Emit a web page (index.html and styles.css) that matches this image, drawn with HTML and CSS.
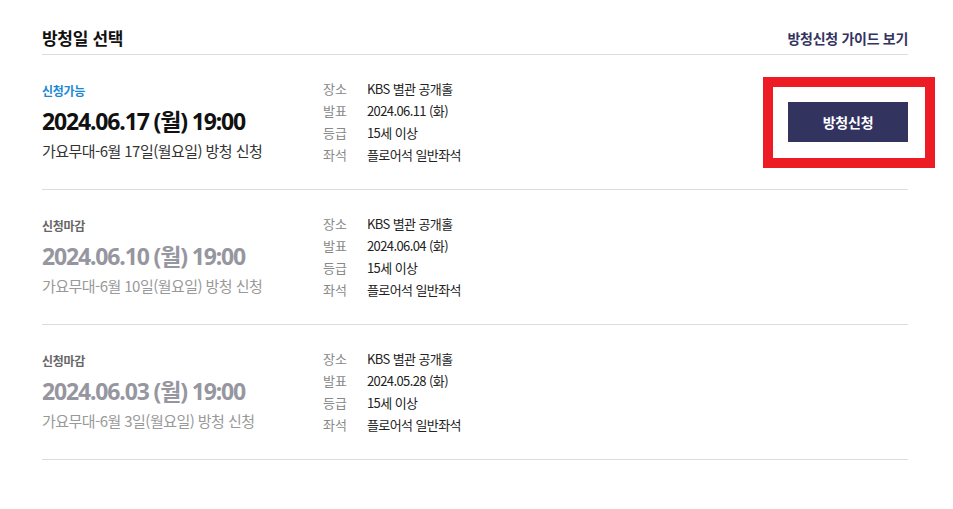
FILE: index.html
```html
<!DOCTYPE html>
<html lang="ko">
<head>
<meta charset="utf-8">
<link rel="stylesheet" href="styles.css">
</head>
<body>
<div class="wrap">
  <div class="head">
    <h2 class="title">방청일 선택</h2>
    <a class="guide">방청신청 가이드 보기</a>
  </div>
  <ul class="list">
    <li class="row open">
      <div class="main">
        <p class="status">신청가능</p>
        <p class="date">2024.06.17 (월) 19:00</p>
        <p class="sub">가요무대-6월 17일(월요일) 방청 신청</p>
      </div>
      <dl class="info">
        <div class="line"><dt>장소</dt><dd>KBS 별관 공개홀</dd></div>
        <div class="line"><dt>발표</dt><dd>2024.06.11 (화)</dd></div>
        <div class="line"><dt>등급</dt><dd>15세 이상</dd></div>
        <div class="line"><dt>좌석</dt><dd>플로어석 일반좌석</dd></div>
      </dl>
      <div class="action">
        <span class="mark"></span>
        <button class="btn">방청신청</button>
      </div>
    </li>
    <li class="row closed">
      <div class="main">
        <p class="status">신청마감</p>
        <p class="date">2024.06.10 (월) 19:00</p>
        <p class="sub">가요무대-6월 10일(월요일) 방청 신청</p>
      </div>
      <dl class="info">
        <div class="line"><dt>장소</dt><dd>KBS 별관 공개홀</dd></div>
        <div class="line"><dt>발표</dt><dd>2024.06.04 (화)</dd></div>
        <div class="line"><dt>등급</dt><dd>15세 이상</dd></div>
        <div class="line"><dt>좌석</dt><dd>플로어석 일반좌석</dd></div>
      </dl>
    </li>
    <li class="row closed">
      <div class="main">
        <p class="status">신청마감</p>
        <p class="date">2024.06.03 (월) 19:00</p>
        <p class="sub">가요무대-6월 3일(월요일) 방청 신청</p>
      </div>
      <dl class="info">
        <div class="line"><dt>장소</dt><dd>KBS 별관 공개홀</dd></div>
        <div class="line"><dt>발표</dt><dd>2024.05.28 (화)</dd></div>
        <div class="line"><dt>등급</dt><dd>15세 이상</dd></div>
        <div class="line"><dt>좌석</dt><dd>플로어석 일반좌석</dd></div>
      </dl>
    </li>
  </ul>
</div>
</body>
</html>
```

FILE: styles.css
```css
* { box-sizing: border-box; }
html, body { margin: 0; padding: 0; background: #fff; }
body {
  font-family: "Noto Sans CJK KR", "Noto Sans", sans-serif;
  color: #222;
}
.wrap {
  width: 866px;
  margin-left: 42px;
}
.head {
  display: flex;
  justify-content: space-between;
  align-items: center;
  padding: 26px 0 4px;
  border-bottom: 1px solid #dcdcdc;
}
.title {
  margin: 0;
  font-size: 17px;
  line-height: 24px;
  font-weight: 700;
  color: #111;
  letter-spacing: -0.3px;
}
.guide {
  font-size: 14px;
  font-weight: 700;
  color: #33335f;
  line-height: 24px;
  letter-spacing: -0.3px;
}
.list { list-style: none; margin: 0; padding: 0; }
.row {
  display: flex;
  align-items: center;
  min-height: 135px;
  border-bottom: 1px solid #dcdcdc;
}
.main { width: 281px; }
.main p { margin: 0; }
.status {
  font-size: 12px;
  line-height: 18px;
  font-weight: 700;
  letter-spacing: -0.3px;
}
.date {
  margin-top: 6px !important;
  font-family: "Noto Sans", "Noto Sans CJK KR", sans-serif;
  font-size: 23px;
  line-height: 30px;
  font-weight: 700;
  letter-spacing: -1.15px;
}
.sub {
  margin-top: 4px !important;
  font-size: 15px;
  line-height: 22px;
  letter-spacing: -0.55px;
}
.open .status { color: #1a88d4; }
.open .date { color: #111; }
.open .sub { color: #333; }
.closed .status { color: #666; }
.closed .date { color: #9696a0; }
.closed .sub { color: #999; }
.info { margin: 0; flex: 1; }
.line {
  display: flex;
  font-size: 13px;
  line-height: 22px;
}
.line dt { width: 44px; color: #888; }
.line dd { margin: 0; color: #222; letter-spacing: -0.6px; }
.action {
  position: relative;
  width: 120px;
  height: 40px;
}
.btn {
  width: 120px;
  height: 40px;
  border: 0;
  background: #333360;
  color: #fff;
  font-family: inherit;
  font-size: 14px;
  font-weight: 700;
  letter-spacing: -0.2px;
  padding: 0;
}
.mark {
  position: absolute;
  top: -25px;
  left: -25px;
  right: -27px;
  bottom: -26px;
  border: 10px solid #ed1c24;
}
```
